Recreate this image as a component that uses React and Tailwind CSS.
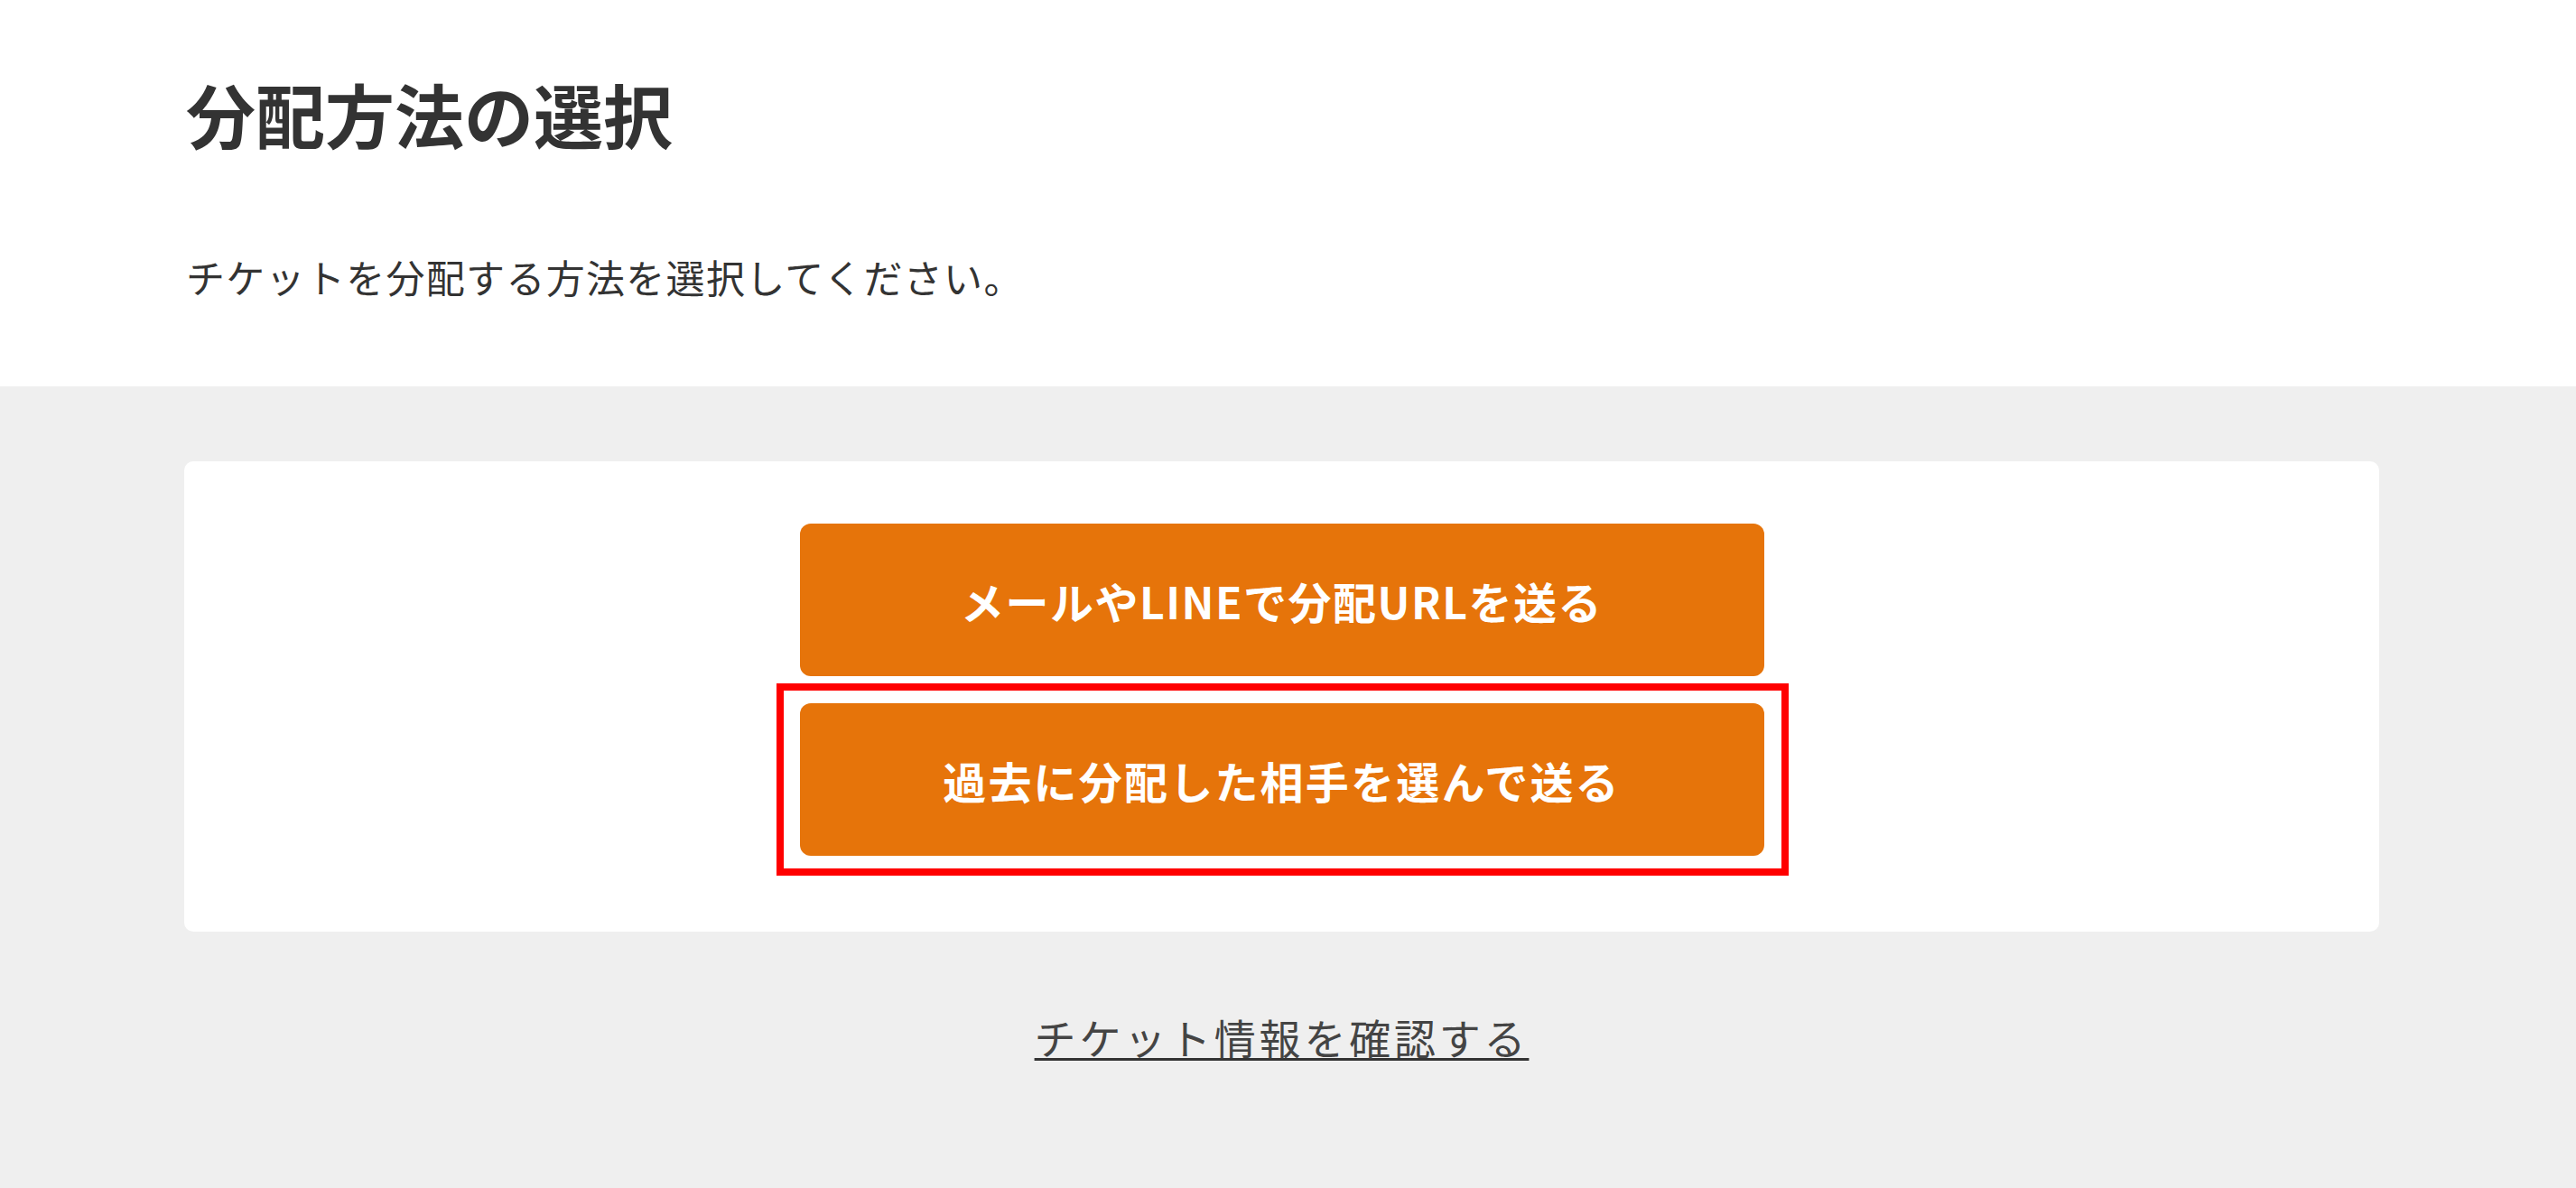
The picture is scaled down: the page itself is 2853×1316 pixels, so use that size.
export default function App() {
  const jp = { fontFamily: '"Noto Sans CJK JP", "Noto Sans", sans-serif' };
  return (
    <div className="min-h-[1316px] w-full bg-[#efefef]" style={jp}>
      <div className="bg-white h-[428px] pl-[206px] pr-[218px] pt-[87px]">
        <h1 className="text-[77px] leading-none font-bold text-[#333333]">分配方法の選択</h1>
        <p className="mt-[121px] text-[43px] leading-none tracking-[1.3px] text-[#333333] font-normal">
          チケットを分配する方法を選択してください。
        </p>
      </div>
      <div className="pl-[204px] pr-[218px] pt-[83px]">
        <div className="bg-white rounded-[10px] pt-[69px] pb-[84px] flex flex-col items-center gap-[30px]">
          <button className="w-[1068px] h-[169px] rounded-[12px] bg-[#e6740a] text-white text-[48px] font-bold tracking-[1.5px] leading-none flex items-center justify-center">
            メールやLINEで分配URLを送る
          </button>
          <div className="relative">
            <button className="w-[1068px] h-[169px] rounded-[12px] bg-[#e6740a] text-white text-[48px] font-bold tracking-[2.2px] leading-none flex items-center justify-center">
              過去に分配した相手を選んで送る
            </button>
            <div className="absolute left-[-26px] right-[-27px] top-[-22px] bottom-[-22px] border-[8px] border-[#ff0000] pointer-events-none"></div>
          </div>
        </div>
        <div className="flex justify-center mt-[93px]">
          <a href="#" className="text-[46px] leading-none tracking-[3.8px] text-[#444444] underline decoration-[#333333] decoration-[3px] underline-offset-[4px]">
            チケット情報を確認する
          </a>
        </div>
      </div>
    </div>
  );
}
